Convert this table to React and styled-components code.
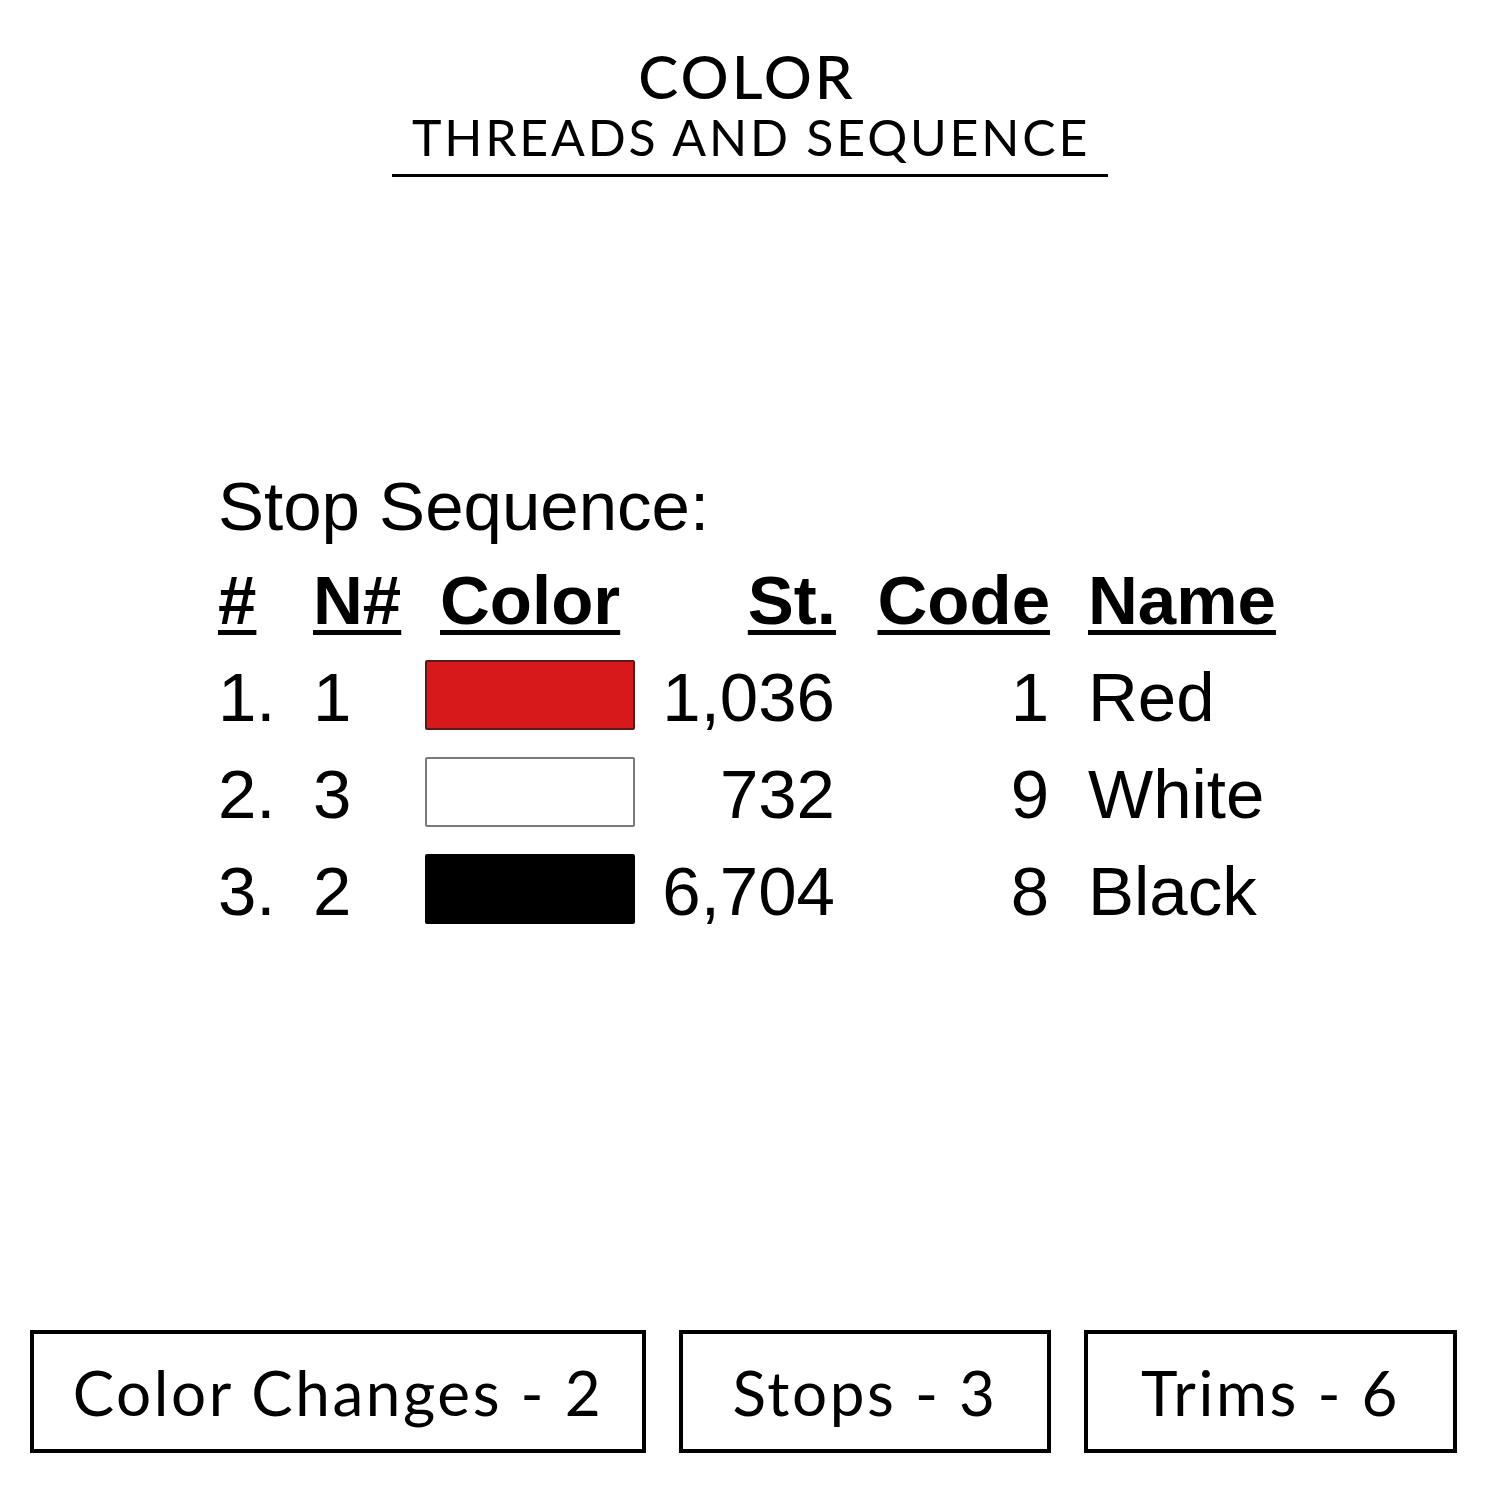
import React from 'react';
import styled, { createGlobalStyle } from 'styled-components';

const GlobalStyle = createGlobalStyle`
    html, body {
        margin: 0;
        padding: 0;
        background: #ffffff;
    }
`

const stops = [
    { n: '1.', needle: '1', color: '#d7191c', border: '#5a1a1a', st: '1,036', code: '1', name: 'Red' },
    { n: '2.', needle: '3', color: '#ffffff', border: '#7a7a7a', st: '732', code: '9', name: 'White' },
    { n: '3.', needle: '2', color: '#000000', border: '#000000', st: '6,704', code: '8', name: 'Black' },
]

function App() {
    return (
        <Page>
            <GlobalStyle/>
            <Header>
                <Title>COLOR</Title>
                <Subtitle>THREADS AND SEQUENCE</Subtitle>
            </Header>

            <Sequence>
                <Caption>Stop Sequence:</Caption>
                <Grid>
                    <Head>#</Head>
                    <Head>N#</Head>
                    <Head indent>Color</Head>
                    <Head right>St.</Head>
                    <Head right>Code</Head>
                    <Head name>Name</Head>
                    {stops.map((s) => (
                        <React.Fragment key={s.n}>
                            <Cell>{s.n}</Cell>
                            <Cell>{s.needle}</Cell>
                            <Cell><Swatch fill={s.color} edge={s.border}/></Cell>
                            <Cell right>{s.st}</Cell>
                            <Cell right>{s.code}</Cell>
                            <Cell name>{s.name}</Cell>
                        </React.Fragment>
                    ))}
                </Grid>
            </Sequence>

            <Stats>
                <StatBox w={616}>Color Changes - 2</StatBox>
                <StatBox w={372}>Stops - 3</StatBox>
                <StatBox w={373}>Trims - 6</StatBox>
            </Stats>
        </Page>
    )
}

export default App;

const Page = styled.div`
    width: 1500px;
    height: 1500px;
    background: #ffffff;
    display: flex;
    flex-direction: column;
    color: #000000;
`

const Header = styled.div`
    display: flex;
    flex-direction: column;
    align-items: center;
    padding-top: 43px;
`

const Title = styled.div`
    font-family: Lato, "Open Sans", sans-serif;
    font-weight: 500;
    font-size: 60px;
    line-height: 66px;
    letter-spacing: 3px;
    margin-right: 6px;
`

const Subtitle = styled.div`
    font-family: Lato, "Open Sans", sans-serif;
    font-weight: 400;
    font-size: 50px;
    line-height: 56px;
    letter-spacing: 2.8px;
    padding: 0 18px 9px 20px;
    border-bottom: 3px solid #000000;
`

const Sequence = styled.div`
    padding-left: 218px;
    padding-top: 290px;
    font-family: "Liberation Sans", Arial, sans-serif;
`

const Caption = styled.div`
    font-size: 69px;
    line-height: 80px;
    margin-bottom: 5px;
`

const Grid = styled.div`
    display: grid;
    grid-template-columns: 95px 112px 220px 191px 214px auto;
    grid-auto-rows: 97px;
    align-items: center;
    font-size: 69px;
    line-height: 1;
`

const Head = styled.div`
    font-weight: bold;
    text-decoration: underline;
    text-decoration-thickness: 5px;
    text-underline-offset: 6px;
    text-align: ${(p) => (p.right ? 'right' : 'left')};
    padding-left: ${(p) => (p.indent ? '15px' : p.name ? '38px' : '0')};
`

const Cell = styled.div`
    text-align: ${(p) => (p.right ? 'right' : 'left')};
    padding-left: ${(p) => (p.name ? '38px' : '0')};
    ${(p) => p.right && 'padding-right: 1px;'}
`

const Swatch = styled.div`
    width: 206px;
    height: 66px;
    margin-top: -6px;
    background: ${(p) => p.fill};
    border: 2px solid ${(p) => p.edge};
    border-radius: 2px;
`

const Stats = styled.div`
    margin-top: auto;
    margin-bottom: 47px;
    padding-left: 30px;
    display: flex;
    gap: 33px;
`

const StatBox = styled.div`
    width: ${(p) => p.w}px;
    height: 123px;
    box-sizing: border-box;
    border: 4px solid #000000;
    display: flex;
    align-items: center;
    justify-content: center;
    font-family: Lato, "Open Sans", sans-serif;
    font-size: 62px;
    letter-spacing: 2.6px;
`
